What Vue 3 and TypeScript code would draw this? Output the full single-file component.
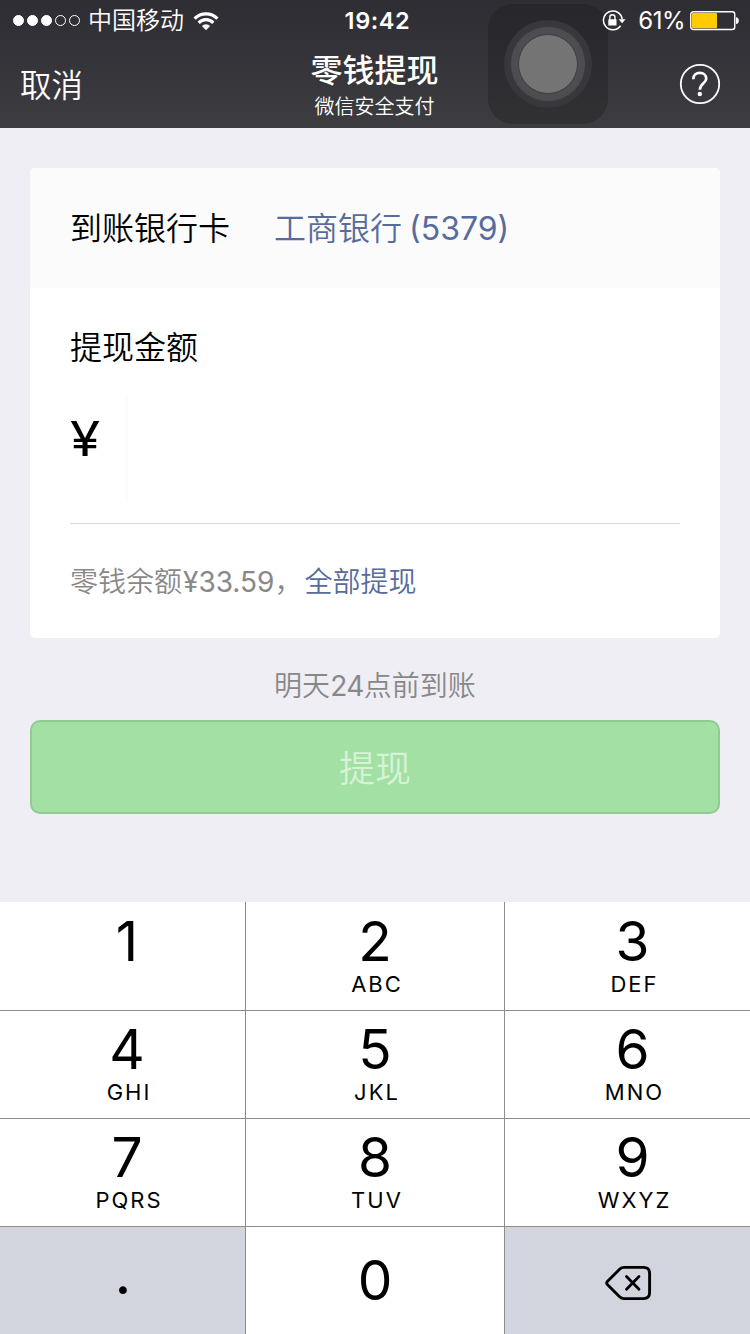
<script setup lang="ts">
interface Key {
  digit: string
  letters?: string
  kind?: 'dot' | 'delete'
}

const signal: boolean[] = [true, true, true, false, false]

const keys: Key[] = [
  { digit: '1', letters: '' },
  { digit: '2', letters: 'ABC' },
  { digit: '3', letters: 'DEF' },
  { digit: '4', letters: 'GHI' },
  { digit: '5', letters: 'JKL' },
  { digit: '6', letters: 'MNO' },
  { digit: '7', letters: 'PQRS' },
  { digit: '8', letters: 'TUV' },
  { digit: '9', letters: 'WXYZ' },
  { digit: '.', kind: 'dot' },
  { digit: '0' },
  { digit: '', kind: 'delete' },
]
</script>

<template>
  <div class="screen">
    <header class="top">
      <div class="assistive">
        <span class="ring ring-outer"><span class="ring ring-mid"><span class="ring ring-core"></span></span></span>
      </div>
      <div class="status">
        <div class="status-left">
          <span class="signal">
            <i v-for="(on, n) in signal" :key="n" :class="{ on }"></i>
          </span>
          <span class="carrier">中国移动</span>
          <svg class="wifi" width="26" height="20" viewBox="0 0 26 20">
            <g fill="none" stroke="#fff" stroke-width="3.2">
              <path d="M1.6 7.6 A16 16 0 0 1 24.4 7.6" />
              <path d="M5.7 11.8 A10.2 10.2 0 0 1 20.3 11.8" />
            </g>
            <path d="M8.9 15 A5.8 5.8 0 0 1 17.1 15 L13 19.2 Z" fill="#fff" />
          </svg>
        </div>
        <span class="clock">19:42</span>
        <div class="status-right">
          <svg class="lock" width="24" height="22" viewBox="0 0 24 22">
            <path d="M18.6 15.7 A9.4 9.4 0 1 1 20.2 9.3" fill="none" stroke="#fff" stroke-width="1.5" />
            <path d="M16.6 9.2 H23.6 L20.1 13.2 Z" fill="#fff" />
            <rect x="6.3" y="9.2" width="8.2" height="6.4" rx=".6" fill="#fff" />
            <path d="M7.8 10 V7.4 A2.6 2.6 0 0 1 13 7.4 V10" fill="none" stroke="#fff" stroke-width="1.4" />
          </svg>
          <span class="percent">61%</span>
          <svg class="battery" width="50" height="20" viewBox="0 0 50 20">
            <rect x=".75" y=".75" width="44" height="17.8" rx="2.5" fill="none" stroke="#fff" stroke-width="1.4" />
            <rect x="2" y="2" width="25" height="15.3" rx="1" fill="#ffcc00" />
            <path d="M46 6.2 Q48.8 6.5 48.8 9.6 Q48.8 12.8 46 13.1 Z" fill="#fff" />
          </svg>
        </div>
      </div>
      <nav class="nav">
        <span class="cancel">取消</span>
        <div class="titles">
          <h1>零钱提现</h1>
          <p>微信安全支付</p>
        </div>
        <svg class="help" width="42" height="42" viewBox="0 0 42 42" fill="none" stroke="#fff">
          <circle cx="21" cy="21" r="19.2" stroke-width="1.8" />
          <path d="M14.3 16.2 C14.3 12.2 17.1 9.9 20.8 9.9 C24.6 9.9 27.2 12.4 27.2 15.7 C27.2 20.2 20.9 20.6 20.9 26.8" stroke-width="2.7" />
          <circle cx="20.8" cy="31" r="2.2" fill="#fff" stroke="none" />
        </svg>
      </nav>
    </header>

    <main>
      <section class="card">
        <div class="bank">
          <span class="bank-label">到账银行卡</span>
          <span class="bank-name">工商银行<b>(5379)</b></span>
        </div>
        <div class="amount">
          <div class="amount-label">提现金额</div>
          <div class="amount-field"><span class="yen">¥</span><span class="caret"></span></div>
          <div class="balance">零钱余额<em>¥33.59</em>，<a>全部提现</a></div>
        </div>
      </section>
      <p class="hint">明天<em>24</em>点前到账</p>
      <button class="submit" type="button">提现</button>
    </main>

    <div class="keypad">
      <div v-for="(key, n) in keys" :key="n" class="key" :class="key.kind">
        <svg v-if="key.kind === 'delete'" width="48" height="36" viewBox="0 0 48 36" fill="none" stroke="#000" stroke-linejoin="round" stroke-linecap="round">
          <path d="M2.8 18 Q2.4 17.4 3.6 16.2 L15.6 4.3 Q17.5 2.4 20.1 2.4 H39.5 Q45.6 2.4 45.6 8.4 V27.6 Q45.6 33.6 39.5 33.6 H20.1 Q17.5 33.6 15.6 31.7 L3.6 19.8 Q2.4 18.6 2.8 18 Z" stroke-width="2.9" />
          <path d="M22.5 11.6 L35 24.2 M35 11.6 L22.5 24.2" stroke-width="2.8" />
        </svg>
        <span v-else-if="key.kind === 'dot'" class="point">{{ key.digit }}</span>
        <template v-else>
          <span class="digit">{{ key.digit }}</span>
          <span v-if="key.letters" class="letters">{{ key.letters }}</span>
        </template>
      </div>
    </div>
  </div>
</template>

<style>
body {
  margin: 0;
}
</style>

<style scoped>
* {
  box-sizing: border-box;
}
.screen {
  width: 750px;
  height: 1334px;
  display: flex;
  flex-direction: column;
  overflow: hidden;
  background: #efeef4;
  color: #000;
  font-family: Inter, "Noto Sans CJK SC", sans-serif;
  font-weight: 350;
}
h1,
p {
  margin: 0;
}
em,
b {
  font-style: normal;
  font-weight: inherit;
}
.top {
  position: relative;
  height: 128px;
  background: linear-gradient(#2e2d33, #3d3c41);
  color: #fff;
}
.assistive {
  position: absolute;
  left: 488px;
  top: 4px;
  width: 120px;
  height: 120px;
  border-radius: 25px;
  background: linear-gradient(#27262b, #313033);
  display: flex;
  align-items: center;
  justify-content: center;
}
.ring {
  display: flex;
  align-items: center;
  justify-content: center;
  border-radius: 50%;
}
.ring-outer {
  width: 88px;
  height: 88px;
  background: #38373b;
}
.ring-mid {
  width: 76px;
  height: 76px;
  background: #4d4c50;
  border: 1px solid #3b3a3e;
}
.ring-core {
  width: 60px;
  height: 60px;
  background: #747475;
  border: 1px solid #3e3d40;
}
.status {
  position: relative;
  height: 41px;
  display: grid;
  grid-template-columns: 1fr auto 1fr;
  align-items: center;
  line-height: 41px;
  font-size: 24px;
}
.status-left,
.status-right,
.signal {
  display: flex;
  align-items: center;
}
.status-left {
  padding-left: 13px;
}
.signal {
  gap: 3px;
}
.signal i {
  width: 11px;
  height: 11px;
  border: 1px solid #fff;
  border-radius: 50%;
}
.signal i.on {
  background: #fff;
}
.carrier {
  margin-left: 8px;
}
.wifi {
  margin-left: 9px;
}
.clock {
  font-size: 23.5px;
  font-weight: 600;
  letter-spacing: 0.6px;
  margin-left: 5px;
}
.status-right {
  justify-content: flex-end;
  padding-right: 10px;
}
.percent {
  margin: 0 5px 0 12px;
  font-weight: 400;
  font-size: 24px;
  letter-spacing: -0.5px;
}
.nav {
  position: relative;
  height: 88px;
  margin-top: -1px;
  display: grid;
  grid-template-columns: 1fr auto 1fr;
  align-items: center;
  padding: 0 29px 0 20px;
}
.cancel {
  font-size: 31.5px;
  margin-top: -3px;
}
.titles {
  text-align: center;
  margin-left: 8px;
  padding-top: 2px;
}
.titles h1 {
  font-size: 32px;
  line-height: 44px;
  font-weight: 500;
}
.titles p {
  font-size: 20px;
  line-height: 28px;
}
.help {
  justify-self: end;
}
.card {
  margin: 40px 30px 0;
  height: 470px;
  border-radius: 5px;
  overflow: hidden;
  background: #fff;
  font-size: 32px;
}
.bank {
  height: 120px;
  padding: 0 0 4px 40px;
  display: flex;
  align-items: center;
  background: #fbfbfb;
}
.bank-name {
  margin-left: 44px;
  color: #576b9c;
}
.bank-name b {
  margin-left: 7px;
  font-weight: 400;
}
.amount {
  padding: 36px 40px 0;
}
.amount-label {
  line-height: 48px;
}
.amount-field {
  height: 152px;
  display: flex;
  align-items: flex-start;
  padding-top: 23px;
  border-bottom: 1px solid #d9d9d9;
}
.yen {
  width: 55px;
  font-size: 48px;
  line-height: 88px;
  font-weight: 400;
  transform: scaleX(1.14);
  transform-origin: left;
}
.caret {
  width: 3px;
  height: 107px;
  background: #fcfcfd;
}
.balance {
  margin-top: 34px;
  font-size: 28px;
  line-height: 48px;
  color: #888;
}
.balance em,
.hint em {
  font-weight: 370;
}
.balance em {
  margin-left: 1px;
}
.balance a {
  margin-left: 2px;
  color: #576b9c;
}
.hint {
  margin-top: 24px;
  height: 48px;
  line-height: 48px;
  font-size: 28px;
  color: #888;
  text-align: center;
}
.hint em {
  letter-spacing: -0.5px;
}
.submit {
  display: block;
  width: 690px;
  height: 94px;
  margin: 10px 30px 0;
  padding: 0 0 3px;
  border: 2px solid #91cb94;
  border-radius: 10px;
  background: #a3e0a4;
  color: #d7f2d8;
  font: inherit;
  font-size: 36px;
}
.keypad {
  margin-top: auto;
  display: grid;
  grid-template-columns: 245px 259px 246px;
  grid-auto-rows: 108px;
}
.key {
  display: flex;
  flex-direction: column;
  align-items: center;
  padding-top: 8px;
  background: #fff;
  border-top: 1px solid #8c8c8c;
  border-left: 1px solid #8c8c8c;
}
.key:nth-child(-n + 3) {
  border-top: 0;
  padding-top: 9px;
}
.key:nth-child(3n + 1) {
  border-left: 0;
  padding-left: 9px;
}
.key:nth-child(3n) {
  padding-left: 10px;
}
.digit {
  font-size: 55px;
  line-height: 60px;
  font-weight: 400;
}
.key:nth-child(11) {
  padding-top: 23px;
}
.letters {
  font-size: 22px;
  line-height: 26px;
  font-weight: 370;
  letter-spacing: 2px;
  margin-right: -4px;
}
.key.dot,
.key.delete {
  justify-content: center;
  padding: 0;
  background: #d2d5dd;
}
.key.delete {
  padding: 5px 0 0 1px;
}
.point {
  font-size: 54px;
  line-height: 60px;
  margin-top: -12px;
  margin-left: 1px;
  font-weight: 450;
}
</style>
